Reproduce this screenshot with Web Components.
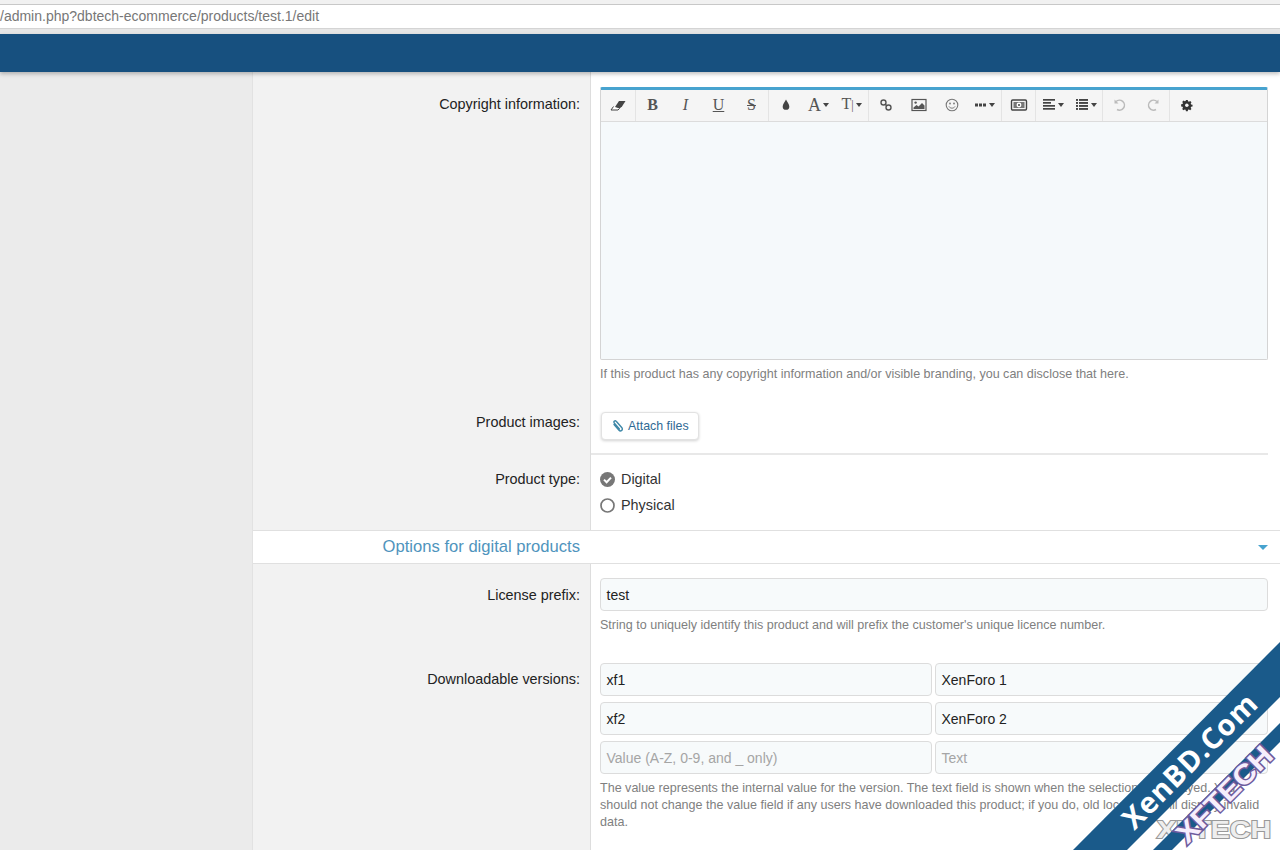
<!DOCTYPE html>
<html lang="en">
<head>
<meta charset="utf-8">
<title>Edit product</title>
<style>
  html, body { margin: 0; height: 100%; overflow: hidden; background: #fff; }
  body { font-family: "Liberation Sans", Arial, sans-serif; font-size: 14px; color: #222; }
  .page { position: relative; display: flex; flex-direction: column; height: 850px; overflow: hidden; }
</style>
</head>
<body>
<div class="page">
  <browser-bar>/admin.php?dbtech-ecommerce/products/test.1/edit</browser-bar>
  <top-nav></top-nav>
  <admin-shell>
    <form-row label="Copyright information:" pad="15px" label-pad="24px" bottom="18px">
      <rich-editor></rich-editor>
      <form-hint>If this product has any copyright information and/or visible branding, you can disclose that here.</form-hint>
    </form-row>
    <form-row label="Product images:" pad="11px" label-pad="13px" bottom="0px" divider>
      <attach-button>Attach files</attach-button>
    </form-row>
    <form-row label="Product type:" pad="11px" label-pad="16px" bottom="12px">
      <radio-option checked>Digital</radio-option>
      <radio-option>Physical</radio-option>
    </form-row>
    <section-head>Options for digital products</section-head>
    <form-row label="License prefix:" pad="14px" label-pad="23px" bottom="14px">
      <text-field>test</text-field>
      <form-hint>String to uniquely identify this product and will prefix the customer's unique licence number.</form-hint>
    </form-row>
    <form-row label="Downloadable versions:" pad="15px" label-pad="23px" bottom="0px">
      <pair-row><text-field>xf1</text-field><text-field>XenForo 1</text-field></pair-row>
      <pair-row><text-field>xf2</text-field><text-field>XenForo 2</text-field></pair-row>
      <pair-row><text-field placeholder>Value (A-Z, 0-9, and _ only)</text-field><text-field placeholder>Text</text-field></pair-row>
      <form-hint>The value represents the internal value for the version. The text field is shown when the selection is displayed. You should not change the value field if any users have downloaded this product; if you do, old local data will display invalid data.</form-hint>
    </form-row>
  </admin-shell>
  <corner-ribbon></corner-ribbon>
</div>

<script>
const ICONS = {
  eraser: '<path d="M5 12.5 10 5h6.5l-3.5 5.5-3 2.5z" fill="#444"/><path d="M4.5 10.5 2 14h7l1.5-1.5" fill="#fff" stroke="#444" stroke-width="1"/>',
  drop: '<path d="M9 3.5c1.1 2.6 3.3 4.4 3.3 6.9A3.3 3.3 0 0 1 9 13.8a3.3 3.3 0 0 1-3.3-3.4C5.7 7.9 7.9 6.1 9 3.5z" fill="#444"/>',
  link: '<g fill="none" stroke="#555" stroke-width="1.4"><circle cx="6.5" cy="6.5" r="2.5"/><circle cx="11.5" cy="11.5" r="2.5"/><path d="M8.3 8.3l1.4 1.4"/></g>',
  image: '<rect x="2" y="3.5" width="14" height="11" fill="none" stroke="#555" stroke-width="1.2"/><circle cx="5.6" cy="6.6" r="1.2" fill="#555"/><path d="M3.5 13v-1.5l3-2.5 2 1.5 3.5-3.5 2.5 2.5V13z" fill="#555"/>',
  smile: '<circle cx="9" cy="9" r="5.8" fill="none" stroke="#777" stroke-width="1.1"/><circle cx="7" cy="7.5" r=".9" fill="#777"/><circle cx="11" cy="7.5" r=".9" fill="#777"/><path d="M6 10.5c1.4 2.2 4.6 2.2 6 0" fill="none" stroke="#777" stroke-width="1"/>',
  more: '<g fill="#444"><rect x="1" y="7.5" width="3" height="3"/><rect x="5" y="7.5" width="3" height="3"/><rect x="9" y="7.5" width="3" height="3"/></g>',
  video: '<rect x="1.5" y="4" width="15" height="10" rx="1.2" fill="none" stroke="#444" stroke-width="1.4"/><rect x="3.5" y="6" width="11" height="6" fill="#777"/><circle cx="9" cy="9" r="2.4" fill="#fff"/><circle cx="9" cy="9" r="1" fill="#444"/>',
  align: '<g fill="#444"><rect x="1" y="3" width="12" height="1.7"/><rect x="1" y="6" width="8" height="1.7"/><rect x="1" y="9" width="12" height="1.7"/><rect x="1" y="12" width="12" height="1.7"/></g>',
  list: '<g fill="#444"><rect x="1" y="3" width="2" height="1.9"/><rect x="4" y="3" width="9" height="1.9"/><rect x="1" y="6" width="2" height="1.9"/><rect x="4" y="6" width="9" height="1.9"/><rect x="1" y="9" width="2" height="1.9"/><rect x="4" y="9" width="9" height="1.9"/><rect x="1" y="12" width="2" height="1.9"/><rect x="4" y="12" width="9" height="1.9"/></g>',
  undo: '<path d="M5 5.5A5 5 0 1 1 6 13.5" fill="none" stroke="#bbb" stroke-width="1.5"/><path d="M3.5 3.5v4h4z" fill="#bbb"/>',
  redo: '<path d="M13 5.5A5 5 0 1 0 12 13.5" fill="none" stroke="#bbb" stroke-width="1.5"/><path d="M14.5 3.5v4h-4z" fill="#bbb"/>',
  gear: '<g transform="translate(2 2) scale(.76)"><path d="M7.8 2.5h2.4l.4 1.9 1.2.5 1.6-1 1.7 1.7-1 1.6.5 1.2 1.9.4v2.4l-1.9.4-.5 1.2 1 1.6-1.7 1.7-1.6-1-1.2.5-.4 1.9H7.8l-.4-1.9-1.2-.5-1.6 1-1.7-1.7 1-1.6-.5-1.2-1.9-.4V8.3l1.9-.4.5-1.2-1-1.6 1.7-1.7 1.6 1 1.2-.5z" fill="#333"/><circle cx="9" cy="9.5" r="2.3" fill="#f5f5f5"/></g>'
};

const svg = (name, w = 18) => `<svg width="${w}" height="18" viewBox="0 0 ${w} 18">${ICONS[name]}</svg>`;

class BrowserBar extends HTMLElement {
  constructor() {
    super();
    this.attachShadow({ mode: 'open' }).innerHTML = `
      <style>
        :host { display: block; height: 34px; background: #e6e6e6; flex: none; }
        .top { height: 4px; background: #f1f1f1; border-bottom: 1px solid #c8c8c8; }
        .url {
          height: 23px; line-height: 23px; background: #fff; border-bottom: 1px solid #d4d4d4;
          font-size: 14px; color: #777; white-space: nowrap; overflow: hidden;
        }
      </style>
      <div class="top"></div>
      <div class="url"><slot></slot></div>`;
  }
}

class TopNav extends HTMLElement {
  constructor() {
    super();
    this.attachShadow({ mode: 'open' }).innerHTML = `
      <style>
        :host {
          display: block; height: 38px; flex: none; position: relative; z-index: 2;
          background: #17507f; box-shadow: 0 2px 4px rgba(0, 0, 0, .25);
        }
      </style>`;
  }
}

class AdminShell extends HTMLElement {
  constructor() {
    super();
    this.attachShadow({ mode: 'open' }).innerHTML = `
      <style>
        :host { display: grid; grid-template-columns: 252px 1fr; flex: 1; min-height: 0; }
        .side { background: #ebebeb; }
        .main { background: #f2f2f2; border-left: 1px solid #e2e2e2; display: flex; flex-direction: column; }
      </style>
      <div class="side"></div>
      <div class="main"><slot></slot></div>`;
  }
}

class FormRow extends HTMLElement {
  constructor() {
    super();
    this.attachShadow({ mode: 'open' });
  }

  connectedCallback() {
    const a = n => this.getAttribute(n);
    this.shadowRoot.innerHTML = `
      <style>
        :host { display: grid; grid-template-columns: 337px 1fr; flex: none; }
        :host(:last-child) { flex: 1; }
        .label {
          text-align: right; padding: ${a('label-pad')} 10px 0 0; font-size: 14.4px;
          line-height: 17px; color: #222;
        }
        .value {
          background: #fff; border-left: 1px solid #ddd; padding: ${a('pad')} 12px ${a('bottom')} 9px;
          display: flex; flex-direction: column; min-width: 0;
        }
        :host([divider]) .value::after {
          content: ""; display: block; height: 2px; margin: 13px 0 0 -9px; background: #e8e8e8;
        }
      </style>
      <div class="label">${a('label')}</div>
      <div class="value"><slot></slot></div>`;
  }
}

class RichEditor extends HTMLElement {
  constructor() {
    super();
    const groups = [
      [svg('eraser')],
      ['<b class="t">B</b>', '<i class="t">I</i>', '<u class="t">U</u>', '<s class="t">S</s>'],
      [svg('drop'), '<span class="t big">A</span><em></em>', '<span class="t">T<small>|</small></span><em></em>'],
      [svg('link'), svg('image'), svg('smile'), svg('more', 13) + '<em></em>'],
      [svg('video')],
      [svg('align', 14) + '<em></em>', svg('list', 14) + '<em></em>'],
      [svg('undo'), svg('redo')],
      [svg('gear')]
    ];
    const bar = groups.map((g, i) => `<div class="group${i === 0 ? ' first' : ''}">${g.map(b => `<span class="btn">${b}</span>`).join('')}</div>`).join('');
    this.attachShadow({ mode: 'open' }).innerHTML = `
      <style>
        :host {
          display: block; height: 273px; box-sizing: border-box; flex: none;
          border: 1px solid #d4d4d4; border-top: 3px solid #47a3cf; border-radius: 2px;
          background: #f5f9fb;
        }
        .bar { display: flex; height: 31px; background: #f5f5f5; border-bottom: 1px solid #dcdcdc; }
        .group { display: flex; border-right: 1px solid #e4e4e4; }
        .group:last-child { border-right: 0; }
        .btn { width: 33px; height: 29px; display: flex; align-items: center; justify-content: center; gap: 2px; }
        .first .btn { width: 34px; }
        .t { font: 16px/18px "Liberation Serif", serif; color: #555; }
        .big { font-size: 18px; }
        small { font-size: 12px; }
        b.t { font-weight: 700; }
        i.t { font-style: italic; }
        em { width: 0; height: 0; border: 3px solid transparent; border-top: 4px solid #444; border-bottom: 0; }
        svg { display: block; }
      </style>
      <div class="bar">${bar}</div>`;
  }
}

class FormHint extends HTMLElement {
  constructor() {
    super();
    this.attachShadow({ mode: 'open' }).innerHTML = `
      <style>
        :host { display: block; margin-top: 6px; font-size: 12.55px; line-height: 17px; color: #808080; }
      </style><slot></slot>`;
  }
}

class AttachButton extends HTMLElement {
  constructor() {
    super();
    this.attachShadow({ mode: 'open' }).innerHTML = `
      <style>
        :host {
          display: inline-flex; align-self: flex-start; align-items: center; gap: 3px;
          height: 28px; box-sizing: border-box; margin-left: 1px; padding: 0 9px 0 8px;
          background: #fff; border: 1px solid #e2e2e2; border-radius: 4px;
          box-shadow: 0 1px 3px rgba(0, 0, 0, .18); font-size: 12.4px; color: #2f6a94;
        }
        svg { display: block; }
      </style>
      <svg width="15" height="15" viewBox="0 0 15 15"><path d="M4 5.5l5 5.7a1.9 1.9 0 0 0 2.9-2.5L6.2 2.3a1.3 1.3 0 0 0-2 1.7l5.2 5.9" fill="none" stroke="#3f88a8" stroke-width="1.4" stroke-linecap="round"/></svg>
      <slot></slot>`;
  }
}

class RadioOption extends HTMLElement {
  constructor() {
    super();
    this.attachShadow({ mode: 'open' });
  }

  connectedCallback() {
    const mark = this.hasAttribute('checked')
      ? '<circle cx="7.5" cy="7.5" r="7.5" fill="#777"/><path d="M4 7.6l2.6 2.6L11 5.6" fill="none" stroke="#fff" stroke-width="2"/>'
      : '<circle cx="7.5" cy="7.5" r="6.5" fill="#fff" stroke="#777" stroke-width="1.7"/>';
    this.shadowRoot.innerHTML = `
      <style>
        :host { display: flex; align-items: center; gap: 6px; height: 26px; font-size: 14.4px; color: #333; }
        svg { display: block; }
      </style>
      <svg width="15" height="15" viewBox="0 0 15 15">${mark}</svg>
      <slot></slot>`;
  }
}

class SectionHead extends HTMLElement {
  constructor() {
    super();
    this.attachShadow({ mode: 'open' }).innerHTML = `
      <style>
        :host {
          display: grid; grid-template-columns: 337px 1fr; align-items: center; height: 34px; flex: none;
          box-sizing: border-box; background: #fff; border-top: 1px solid #e0e0e0; border-bottom: 1px solid #e0e0e0;
          font-size: 16.6px; color: #4f94bd;
        }
        .t { text-align: right; padding-right: 10px; }
        .caret {
          justify-self: end; margin-right: 12px; width: 0; height: 0;
          border: 5px solid transparent; border-top: 5px solid #47a3cf; border-bottom: 0;
        }
      </style>
      <div class="t"><slot></slot></div><div class="caret"></div>`;
  }
}

class TextField extends HTMLElement {
  constructor() {
    super();
    this.attachShadow({ mode: 'open' }).innerHTML = `
      <style>
        :host {
          display: block; height: 33px; line-height: 32px; box-sizing: border-box; min-width: 0;
          padding: 0 5.5px; background: #f7fafb; border: 1px solid #dcdcdc; border-radius: 4px;
          font-size: 14px; color: #222; flex: none;
        }
        :host([placeholder]) { color: #a5a5a5; }
      </style><slot></slot>`;
  }
}

class PairRow extends HTMLElement {
  constructor() {
    super();
    this.attachShadow({ mode: 'open' }).innerHTML = `
      <style>
        :host { display: grid; grid-template-columns: 332px 1fr; gap: 3px; margin-bottom: 6px; flex: none; }
        :host(:nth-last-child(2)) { margin-bottom: 0; }
      </style><slot></slot>`;
  }
}

class CornerRibbon extends HTMLElement {
  constructor() {
    super();
    this.attachShadow({ mode: 'open' }).innerHTML = `
      <style>
        :host { position: absolute; inset: 0; pointer-events: none; z-index: 5; }
        svg { display: block; }
        .grey { font: 700 24px "Liberation Sans", sans-serif; fill: #eee; stroke: #999; stroke-width: 2px; paint-order: stroke; }
        .main { font: 700 29px "Open Sans", sans-serif; fill: #fff; letter-spacing: 1px; }
        .sub { font: 700 28px "Liberation Sans", sans-serif; fill: #f6eefc; stroke: #6d5a9c; stroke-width: 3px; paint-order: stroke; }
      </style>
      <svg width="1280" height="850" viewBox="0 0 1280 850">
        <text class="grey" x="1157" y="838" textLength="114" lengthAdjust="spacingAndGlyphs">XFTECH</text>
        <polygon points="1280,642 1073,850 1127,850 1280,697" fill="#1a5a8a"/>
        <polygon points="1280,723 1153,850 1172,850 1280,742" fill="#1a5a8a"/>
        <text class="main" transform="translate(1190 761) rotate(-45)" text-anchor="middle" y="10" textLength="178">XenBD.Com</text>
        <text class="sub" transform="translate(1224 794) rotate(-45)" text-anchor="middle" y="10" textLength="124" lengthAdjust="spacingAndGlyphs">XFTECH</text>
      </svg>`;
  }
}

customElements.define('browser-bar', BrowserBar);
customElements.define('top-nav', TopNav);
customElements.define('admin-shell', AdminShell);
customElements.define('form-row', FormRow);
customElements.define('rich-editor', RichEditor);
customElements.define('form-hint', FormHint);
customElements.define('attach-button', AttachButton);
customElements.define('radio-option', RadioOption);
customElements.define('section-head', SectionHead);
customElements.define('text-field', TextField);
customElements.define('pair-row', PairRow);
customElements.define('corner-ribbon', CornerRibbon);
</script>
</body>
</html>
